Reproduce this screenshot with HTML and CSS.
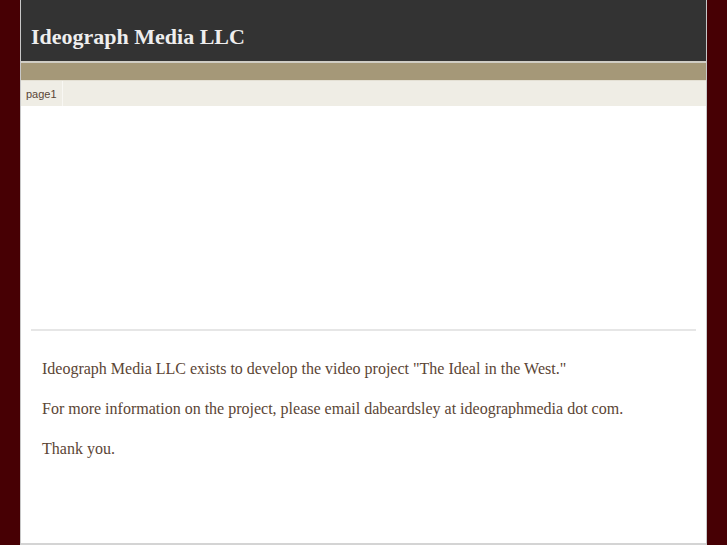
FILE: index.html
```html
<!DOCTYPE html>
<html lang="en">
<head>
    <meta charset="UTF-8">
    <title>Ideograph Media LLC</title>
    <link rel="stylesheet" href="styles.css">
</head>
<body>
    <div class="wrapper">
        <div class="header">
            <h1>Ideograph Media LLC</h1>
        </div>
        <div class="band"></div>
        <div class="nav">
            <a class="tab" href="#">page1</a>
        </div>

        <div class="content">
            <div class="banner"></div>
            <hr>
            <div class="text">
                <p>Ideograph Media LLC exists to develop the video project "The Ideal in the West."</p>
                <p>For more information on the project, please email dabeardsley at ideographmedia dot com.</p>
                <p>Thank you.</p>
            </div>
        </div>
    </div>
</body>
</html>
```

FILE: styles.css
```css
* {
    margin: 0;
    padding: 0;
    box-sizing: border-box;
}

body {
    background: #470004;
    font-family: "Liberation Serif", "Times New Roman", serif;
}

.wrapper {
    margin: 0 20px;
    background: #ffffff;
    border-left: 1px solid #c8c8c8;
    border-right: 1px solid #c8c8c8;
    border-bottom: 2px solid #d4d4d4;
    min-height: 545px;
}

.header {
    background: #333333;
    height: 63px;
    padding: 24px 0 0 10px;
    border-bottom: 2px solid #d0cdc4;
}

h1 {
    font-size: 22px;
    font-weight: bold;
    color: #eeeeee;
    line-height: 26px;
}

.band {
    background: #a59878;
    height: 18px;
    border-bottom: 1px solid #e4e0d4;
}

.nav {
    background: #efede5;
    height: 25px;
    display: flex;
}

.tab {
    font-family: "Liberation Sans", Arial, sans-serif;
    font-size: 11px;
    color: #5a4636;
    text-decoration: none;
    padding: 7px 5px 0 5px;
    width: 42px;
    border-right: 1px solid #f8f7f3;
}

.content {
    padding: 0 10px;
}

.banner {
    height: 223px;
}

hr {
    border: none;
    border-top: 2px solid #e6e6e6;
}

.text {
    padding: 28px 11px 60px;
    color: #5b4535;
    font-size: 16px;
    line-height: 20px;
}

.text p {
    margin-bottom: 20px;
}
```
